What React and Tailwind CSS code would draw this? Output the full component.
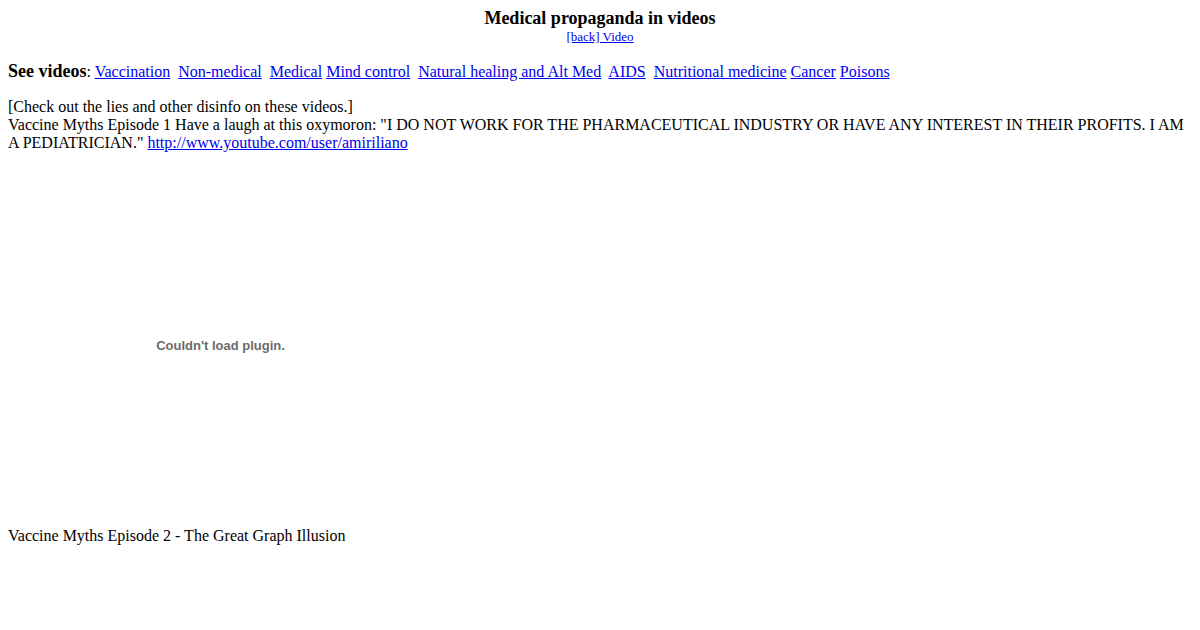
const links = [
  ['Vaccination', '\u00a0 '],
  ['Non-medical', '\u00a0 '],
  ['Medical', ' '],
  ['Mind control', '\u00a0 '],
  ['Natural healing and Alt Med', '\u00a0 '],
  ['AIDS', '\u00a0 '],
  ['Nutritional medicine', ' '],
  ['Cancer', ' '],
  ['Poisons', ''],
];

export default function App() {
  return (
    <div className="min-h-[630px] bg-white px-2 pt-[9px] text-[16px] leading-[18px] text-black font-['Liberation_Serif',serif]">
      <div className="text-center">
        <div className="text-[18px] leading-[18px] font-bold">Medical propaganda in videos</div>
        <a href="#" className="text-[13px] leading-[15px] text-[#0000ee] underline">[back] Video</a>
      </div>

      <p className="mt-4 leading-[21px]">
        <b className="text-[18px]">See videos</b>:{' '}
        {links.map(([label, sep]) => (
          <span key={label}>
            <a href="#" className="text-[#0000ee] underline">{label}</a>
            {sep}
          </span>
        ))}
      </p>

      <p className="mt-4">
        [Check out the lies and other disinfo on these videos.]
        <br />
        Vaccine Myths Episode 1 Have a laugh at this oxymoron: "I DO NOT WORK FOR THE PHARMACEUTICAL INDUSTRY OR HAVE ANY INTEREST IN THEIR PROFITS. I AM A PEDIATRICIAN."{' '}
        <a href="#" className="text-[#0000ee] underline">http://www.youtube.com/user/amiriliano</a>
      </p>

      <div className="mt-[22px] flex h-[344px] w-[425px] items-center justify-center">
        <span className="text-[13px] font-bold text-[#6b6b6b] font-['Liberation_Sans',sans-serif]">Couldn't load plugin.</span>
      </div>

      <p className="mt-[9px]">Vaccine Myths Episode 2 - The Great Graph Illusion</p>
    </div>
  );
}
